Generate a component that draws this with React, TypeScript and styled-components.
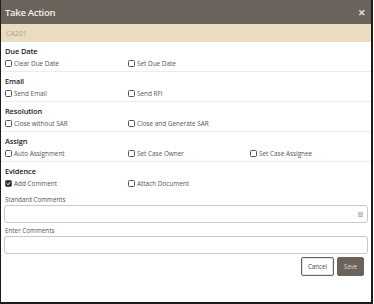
import React from "react";
import styled, { createGlobalStyle } from "styled-components";

const Global = createGlobalStyle`
  html, body { margin: 0; padding: 0; background: #fff; }
  body { font-family: "Open Sans", "Noto Sans", sans-serif; }
  * { box-sizing: border-box; }
`;

const Frame = styled.div`
  width: 373px;
  height: 304px;
  border-left: 1px solid #1c1c1c;
  border-right: 2px solid #1c1c1c;
  border-bottom: 2px solid #1c1c1c;
  display: flex;
  flex-direction: column;
  background: #fff;
  overflow: hidden;
`;

const Header = styled.div`
  height: 24px;
  background: #6b635b;
  display: flex;
  align-items: center;
  justify-content: space-between;
  padding: 0 5px 0 4px;
  color: #f2efe9;
  font-weight: 600;
  font-size: 9.5px;
  letter-spacing: -0.3px;
`;

const Close = styled.span`
  font-size: 9px;
  color: #e8e4de;
  font-weight: 600;
`;

const CaseBar = styled.div`
  height: 18px;
  background: #e9dcbf;
  display: flex;
  align-items: center;
  padding-left: 5px;
  font-size: 7px;
  color: #aaa294;
`;

const Body = styled.div`
  display: flex;
  flex-direction: column;
`;

const Section = styled.div<{ $last?: boolean }>`
  display: flex;
  flex-direction: column;
  padding: 3px 3px 2px 4px;
  border-bottom: 1px solid ${(p) => (p.$last ? "transparent" : "#ececec")};
`;

const Heading = styled.div`
  font-size: 7.4px;
  font-weight: 600;
  color: #222;
  height: 12px;
  line-height: 12px;
  letter-spacing: -0.1px;
`;

const Row = styled.div`
  display: grid;
  grid-template-columns: 123px 122px 1fr;
  height: 12px;
  align-items: center;
`;

const Option = styled.label`
  display: flex;
  align-items: center;
  gap: 2px;
  font-size: 6.4px;
  color: #555;
`;

const Box = styled.span<{ $checked?: boolean }>`
  width: 7px;
  height: 7px;
  border: 1px solid #555;
  border-radius: 1.5px;
  background: ${(p) => (p.$checked ? "#333" : "#fff")};
  display: inline-flex;
  align-items: center;
  justify-content: center;
`;

const Fields = styled.div`
  display: flex;
  flex-direction: column;
  padding: 0 3px 0 3px;
`;

const FieldLabel = styled.div`
  font-size: 6.3px;
  color: #555;
  margin-top: 3px;
  height: 10px;
  line-height: 10px;
  padding-left: 1px;
`;

const Input = styled.div`
  height: 18px;
  border: 1px solid #c8c8c8;
  border-radius: 3px;
  display: flex;
  align-items: center;
  justify-content: flex-end;
  padding-right: 4px;
`;

const Actions = styled.div`
  display: flex;
  justify-content: flex-end;
  gap: 3px;
  margin-top: 3px;
  padding-right: 4px;
`;

const Button = styled.button<{ $primary?: boolean }>`
  height: 19px;
  padding: 0;
  width: ${(p) => (p.$primary ? "27px" : "33px")};
  font-family: inherit;
  font-size: 6.2px;
  border-radius: 2px;
  border: ${(p) => (p.$primary ? "1px solid #6b635b" : "1px solid #666")};
  background: ${(p) => (p.$primary ? "#6b635b" : "#fff")};
  color: ${(p) => (p.$primary ? "#ddd" : "#444")};
  box-shadow: ${(p) => (p.$primary ? "none" : "inset 0 0 0 1px #e2e2e2")};
`;

const Check = ({ label, checked }: { label: string; checked?: boolean }) => (
  <Option>
    <Box $checked={checked}>
      {checked && (
        <svg width="5" height="5" viewBox="0 0 6 6">
          <path d="M1 3 L2.5 4.5 L5 1.5" stroke="#fff" strokeWidth="1.2" fill="none" />
        </svg>
      )}
    </Box>
    {label}
  </Option>
);

const sections: { title: string; items: { label: string; checked?: boolean }[] }[] = [
  { title: "Due Date", items: [{ label: "Clear Due Date" }, { label: "Set Due Date" }] },
  { title: "Email", items: [{ label: "Send Email" }, { label: "Send RFI" }] },
  { title: "Resolution", items: [{ label: "Close without SAR" }, { label: "Close and Generate SAR" }] },
  {
    title: "Assign",
    items: [{ label: "Auto Assignment" }, { label: "Set Case Owner" }, { label: "Set Case Assignee" }],
  },
  { title: "Evidence", items: [{ label: "Add Comment", checked: true }, { label: "Attach Document" }] },
];

export default function App() {
  return (
    <>
      <Global />
      <Frame>
        <Header>
          <span>Take Action</span>
          <Close>✕</Close>
        </Header>
        <CaseBar>CA201</CaseBar>
        <Body>
          {sections.map((s, i) => (
            <Section key={s.title} $last={i === sections.length - 1}>
              <Heading>{s.title}</Heading>
              <Row>
                {s.items.map((it) => (
                  <Check key={it.label} label={it.label} checked={it.checked} />
                ))}
              </Row>
            </Section>
          ))}
          <Fields>
            <FieldLabel>Standard Comments</FieldLabel>
            <Input>
              <svg width="5" height="5" viewBox="0 0 5 5">
                <rect x="0" y="0" width="5" height="5" fill="#bbb" />
                <path d="M0 1.5 H5 M0 3.5 H5" stroke="#eee" strokeWidth="0.6" />
              </svg>
            </Input>
            <FieldLabel>Enter Comments</FieldLabel>
            <Input />
            <Actions>
              <Button>Cancel</Button>
              <Button $primary>Save</Button>
            </Actions>
          </Fields>
        </Body>
      </Frame>
    </>
  );
}
